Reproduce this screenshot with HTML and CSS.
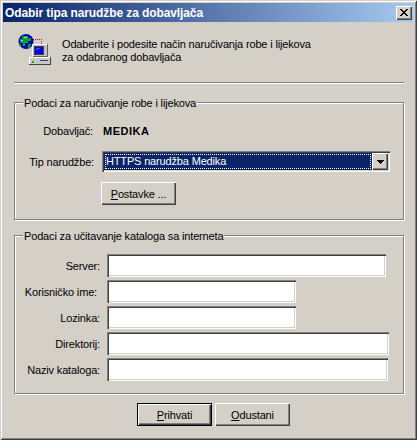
FILE: index.html
```html
<!DOCTYPE html>
<html lang="hr">
<head>
<meta charset="utf-8">
<title>Odabir tipa narudžbe za dobavljača</title>
<link rel="stylesheet" href="styles.css">
</head>
<body>
<div class="window">
  <div class="titlebar">
    <span class="title">Odabir tipa narudžbe za dobavljača</span>
    <button class="close" type="button" aria-label="Zatvori">
      <svg width="8" height="7" viewBox="0 0 8 7" shape-rendering="crispEdges"><path d="M0 0h2v1h1v1h2V1h1V0h2v1H7v1H6v1H5v1h1v1h1v1h1v1H6V6H5V5H3v1H2v1H0V6h1V5h1V4h1V3H2V2H1V1H0z" fill="#000"/></svg>
    </button>
  </div>
  <div class="content">
    <header class="intro">
      <svg class="intro-icon" width="33" height="32" viewBox="0 0 33 32" shape-rendering="crispEdges">
        <path d="M15 6.5h8.500v5" fill="none" stroke="#f00" stroke-width="1" stroke-dasharray="1 1"/>
        <circle cx="8" cy="8.500" r="7.500" fill="#0000a8" shape-rendering="auto"/>
        <path d="M4 3h6v2h3v3h-3v2H7v3H5v-3H2V6h2zM10 11h3v2h-1v2h-2zM1 11h2v2H1z" fill="#00a040"/>
        <path d="M6 4h3v1H6zM3 7h2v1H3z" fill="#a0e8a0"/>
        <path d="M14 11h15v13H14z" fill="#c0c0c0"/>
        <path d="M14 11h15v1H15v12h-1z" fill="#fff"/>
        <path d="M29 11h1v13h-1zM15 23h14v1H15z" fill="#606060"/>
        <path d="M16 13h10v9H16z" fill="#404040"/>
        <path d="M17 14h8v7h-8z" fill="#0000e0"/>
        <path d="M18 15h4v1h-4zM18 16h2v1h-2z" fill="#2050ff"/>
        <path d="M11 24h21v7H11z" fill="#c8c8c8"/>
        <path d="M11 24h21v1H12v6h-1z" fill="#fff"/>
        <path d="M11 31h22v1H11zM32 24h1v8h-1z" fill="#404040"/>
        <path d="M14 28h2v2h-2z" fill="#00c000"/>
        <path d="M22 27h8v1h-8z" fill="#404040"/>
      </svg>
      <p class="intro-text">Odaberite i podesite način naručivanja robe i lijekova<br>za odabranog dobavljača</p>
    </header>
    <div class="separator"></div>

    <section class="group group-order">
      <h2 class="legend">Podaci za naručivanje robe i lijekova</h2>
      <div class="order-row supplier-row">
        <span class="order-label">Dobavljač:</span>
        <strong class="supplier">MEDIKA</strong>
      </div>
      <div class="order-row type-row">
        <span class="order-label type-label">Tip narudžbe:</span>
        <div class="combo">
          <span class="combo-value"><span class="combo-focus">HTTPS narudžba Medika</span></span>
          <span class="combo-arrow"><svg width="7" height="4" viewBox="0 0 7 4" shape-rendering="crispEdges"><path d="M0 0h7v1H6v1H5v1H4v1H3V3H2V2H1V1H0z" fill="#000"/></svg></span>
        </div>
      </div>
      <button class="btn settings" type="button"><u>P</u>ostavke ...</button>
    </section>

    <section class="group group-catalog">
      <h2 class="legend">Podaci za učitavanje kataloga sa interneta</h2>
      <div class="fields">
        <label class="field-label">Server:</label><input class="input w-server" type="text">
        <label class="field-label nudge">Korisničko ime:</label><input class="input w-short" type="text">
        <label class="field-label">Lozinka:</label><input class="input w-short" type="text">
        <label class="field-label">Direktorij:</label><input class="input w-dir" type="text">
        <label class="field-label">Naziv kataloga:</label><input class="input w-name" type="text">
      </div>
    </section>

    <footer class="actions">
      <button class="btn default" type="button"><u>P</u>rihvati</button>
      <button class="btn" type="button"><u>O</u>dustani</button>
    </footer>
  </div>
</div>
</body>
</html>
```
FILE: styles.css
```css
* { box-sizing: border-box; }
html, body { margin: 0; padding: 0; }
body {
  width: 417px;
  height: 440px;
  overflow: hidden;
  background: #d4d0c8;
  font-family: "Liberation Sans", Arial, sans-serif;
  font-size: 11px;
  letter-spacing: -0.16px;
  color: #000;
}
.window {
  width: 417px;
  height: 440px;
  padding: 3px;
  background: #d4d0c8;
  box-shadow: inset 1px 1px 0 #d4d0c8, inset -1px -1px 0 #404040, inset 2px 2px 0 #fff, inset -2px -2px 0 #808080;
}
.titlebar {
  height: 19px;
  display: flex;
  align-items: center;
  justify-content: space-between;
  padding: 0 2px;
  background: linear-gradient(90deg, #0a246a, #a6caf0);
}
.title {
  color: #fff;
  font-weight: bold;
  font-size: 12px;
  letter-spacing: -0.1px;
}
.close {
  width: 16px;
  height: 14px;
  padding: 0;
  display: flex;
  align-items: center;
  justify-content: center;
  border: 0;
  background: #d4d0c8;
  box-shadow: inset 1px 1px 0 #fff, inset -1px -1px 0 #404040, inset -2px -2px 0 #808080;
}
.content { padding: 0 10px 0 11px; }
.intro {
  display: flex;
  align-items: flex-start;
  padding: 11px 0 0 4px;
  height: 60px;
}
.intro-icon { flex: none; }
.intro-text {
  margin: 5px 0 0 11px;
  line-height: 13px;
}
.separator {
  height: 2px;
  background: #808080;
  border-bottom: 1px solid #fff;
}
.group {
  position: relative;
  border: 1px solid #808080;
  box-shadow: 1px 1px 0 #fff, inset 1px 1px 0 #fff;
}
.legend {
  position: absolute;
  top: -7px;
  left: 8px;
  margin: 0;
  padding: 0 1px;
  background: #d4d0c8;
  font-size: 11px;
  font-weight: normal;
  line-height: 14px;
}
.group-order {
  height: 118px;
  margin-top: 18px;
  padding: 19px 0 0 0;
}
.order-row {
  display: flex;
  align-items: center;
}
.supplier-row { height: 18px; }
.order-label {
  width: 78px;
  text-align: right;
}
.supplier {
  margin-left: 10px;
  font-size: 11px;
  letter-spacing: 0.5px;
}
.type-row { margin-top: 11px; }
.type-label { width: 79px; }
.combo {
  width: 288px;
  height: 21px;
  margin-left: 8px;
  padding: 2px;
  display: flex;
  background: #fff;
  box-shadow: inset 1px 1px 0 #808080, inset 2px 2px 0 #404040, inset -1px -1px 0 #fff, inset -2px -2px 0 #d4d0c8;
}
.combo-value {
  flex: 1;
  padding: 1px;
  background: #0a246a;
  color: #fff;
}
.combo-focus {
  display: block;
  height: 100%;
  padding-left: 1px;
  line-height: 14px;
  outline: 1px dotted #fff;
  outline-offset: -1px;
}
.combo-arrow {
  width: 16px;
  flex: none;
  display: flex;
  align-items: center;
  justify-content: center;
  background: #d4d0c8;
  box-shadow: inset 1px 1px 0 #fff, inset -1px -1px 0 #404040, inset -2px -2px 0 #808080;
}
.btn {
  width: 75px;
  height: 23px;
  padding: 0;
  border: 0;
  background: #d4d0c8;
  color: #000;
  font: inherit;
  letter-spacing: inherit;
  box-shadow: inset 1px 1px 0 #fff, inset -1px -1px 0 #404040, inset -2px -2px 0 #808080;
}
.settings { display: block; margin: 10px 0 0 86px; }
.group-catalog {
  height: 159px;
  margin-top: 15px;
  padding-top: 18px;
}
.fields {
  display: grid;
  grid-template-columns: 92px 1fr;
  grid-auto-rows: 23px;
  row-gap: 3px;
  align-items: center;
}
.field-label { text-align: right; padding-right: 7px; }
.field-label.nudge { padding-right: 10px; }
.input {
  height: 23px;
  padding: 0 3px;
  border: 0;
  background: #fff;
  box-shadow: inset 1px 1px 0 #808080, inset 2px 2px 0 #404040, inset -1px -1px 0 #fff, inset -2px -2px 0 #d4d0c8;
}
.w-server { width: 279px; }
.w-short { width: 189px; }
.w-dir { width: 282px; }
.w-name { width: 281px; }
.actions {
  display: flex;
  justify-content: flex-start;
  gap: 3px;
  margin: 9px 0 0 123px;
}
.default { outline: 1px solid #000; outline-offset: -1px; box-shadow: inset 2px 2px 0 #fff, inset -2px -2px 0 #404040, inset -3px -3px 0 #808080; }
```
